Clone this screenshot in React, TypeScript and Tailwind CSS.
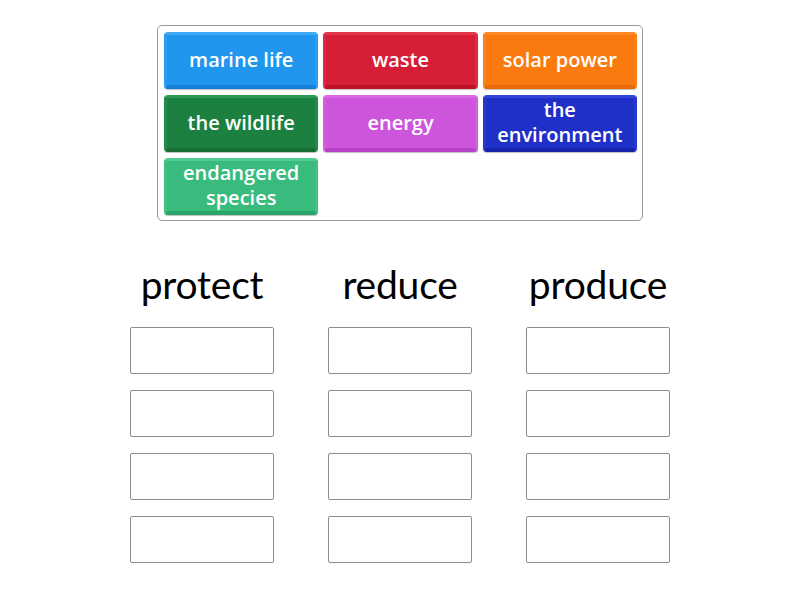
const tiles = [
  { label: "marine life", cls: "bg-[#2196ee] border-t-[#3eaaf6] border-x-[#2a9df0] border-b-[#1680d8]" },
  { label: "waste", cls: "bg-[#d61e37] border-t-[#e2344b] border-x-[#dc2a41] border-b-[#bb1229]" },
  { label: "solar power", cls: "bg-[#fb7a10] border-t-[#fd8a24] border-x-[#fc8219] border-b-[#e8680a]" },
  { label: "the wildlife", cls: "bg-[#1b8040] border-t-[#2f9a55] border-x-[#238a49] border-b-[#166e35]" },
  { label: "energy", cls: "bg-[#cc55dc] border-t-[#d86ae6] border-x-[#d05fe0] border-b-[#b843c8]" },
  { label: "the environment", cls: "bg-[#1f30c8] border-t-[#3345d6] border-x-[#2738cf] border-b-[#1624ad]" },
  { label: "endangered species", cls: "bg-[#38bb7c] border-t-[#52cc90] border-x-[#42c184] border-b-[#2aa56a]" },
]

const columns = ["protect", "reduce", "produce"]

export default function App() {
  return (
    <div className="w-[800px] h-[600px] bg-white font-['Lato',sans-serif] flex flex-col items-center pt-[25px]">
      {/* tile bank */}
      <div className="w-[486px] border border-[#9a9a9a] rounded-[5px] pt-[6px] pl-[6px] pr-[5px] pb-[5px] grid grid-cols-3 gap-x-[5px] gap-y-[6px]">
        {tiles.map((t, i) => (
          <div
            key={i}
            className={`h-[57px] rounded-[4px] border-t-[3px] border-x-[3px] border-b-[4px] flex items-center justify-center text-center text-white font-['Open_Sans',sans-serif] text-[20px] leading-[25px] font-semibold px-2 pb-[2px] shadow-[0_1px_1px_rgba(0,0,0,0.25)] ${t.cls}`}
          >
            {t.label}
          </div>
        ))}
      </div>

      {/* columns */}
      <div className="flex gap-[54px] mt-[37px]">
        {columns.map(c => (
          <div key={c} className="w-[144px] flex flex-col items-center">
            <div className="text-[39px] leading-[52px] text-black -tracking-[0.2px]">{c}</div>
            <div className="flex flex-col gap-[16px] mt-[17px]">
              {[0, 1, 2, 3].map(n => (
                <div key={n} className="w-[144px] h-[47px] border border-[#8c8c8c] rounded-[2px]" />
              ))}
            </div>
          </div>
        ))}
      </div>
    </div>
  )
}
